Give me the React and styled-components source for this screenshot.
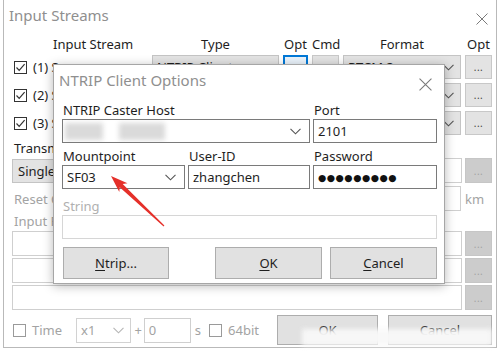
import styled, { createGlobalStyle } from 'styled-components';

const GlobalStyle = createGlobalStyle`
  html, body {
    margin: 0;
    padding: 0;
    background: #fff;
  }
  body {
    font-family: "Noto Sans", "Open Sans", sans-serif;
    font-size: 13px;
    color: #1e1e1e;
  }
`;

const Stage = styled.div`
  position: relative;
  width: 500px;
  height: 352px;
  overflow: hidden;
`;

const Window = styled.div`
  margin-left: 3px;
  width: 494px;
  height: 348px;
  box-sizing: border-box;
  border: 1px solid #b9b9b9;
  border-top: none;
  background: #fff;
  display: flex;
  flex-direction: column;
`;

const TitleBar = styled.div`
  height: ${(p) => p.$h}px;
  flex: none;
  display: flex;
  align-items: flex-start;
  justify-content: space-between;
  padding: ${(p) => p.$pt}px ${(p) => p.$pr}px 0 ${(p) => p.$pl}px;
  box-sizing: border-box;
  font-size: 15px;
  line-height: 20px;
  color: #8f8f8f;
`;

const CloseIcon = ({ size = 12 }) => (
  <svg width={size} height={size} viewBox="0 0 12 12">
    <path d="M0.5 0.5 L11.5 11.5 M11.5 0.5 L0.5 11.5" stroke="#7a7a7a" strokeWidth="1" fill="none" />
  </svg>
);

const Chevron = ({ color = '#555' }) => (
  <svg width="11" height="7" viewBox="0 0 11 7">
    <polyline points="0.5,0.8 5.5,5.8 10.5,0.8" fill="none" stroke={color} strokeWidth="1.1" />
  </svg>
);

const Body = styled.div`
  padding: 0 4px 0 8px;
  display: flex;
  flex-direction: column;
`;

const StreamGrid = styled.div`
  display: grid;
  grid-template-columns: 136px 127px 25px 27px 118px 27px;
  column-gap: 4px;
  row-gap: 4px;
  grid-auto-rows: ${(p) => (p.$header ? 'auto' : '24px')};
`;

const HeaderCell = styled.div`
  height: 22px;
  line-height: 22px;
  text-align: ${(p) => (p.$left ? 'left' : 'center')};
  padding-left: ${(p) => (p.$left ? '41px' : '0')};
`;

const StreamName = styled.div`
  display: flex;
  align-items: center;
  gap: 6px;
  padding-left: 2px;
  white-space: nowrap;
`;

const CheckBox = styled.span`
  width: 13px;
  height: 13px;
  box-sizing: border-box;
  border: 1px solid ${(p) => (p.$dim ? '#9a9a9a' : '#333')};
  background: #fff;
  display: inline-flex;
  align-items: center;
  justify-content: center;
  flex: none;
`;

const Check = () => (
  <svg width="11" height="11" viewBox="0 0 11 11">
    <polyline points="1.5,5.5 4.2,8.3 9.6,2.2" fill="none" stroke="#333" strokeWidth="1.2" />
  </svg>
);

const Combo = styled.div`
  height: ${(p) => p.$h || 24}px;
  width: ${(p) => (p.$w ? `${p.$w}px` : 'auto')};
  box-sizing: border-box;
  border: 1px solid ${(p) => p.$border || '#c4c4c4'};
  background: ${(p) => p.$bg || '#e3e3e3'};
  color: ${(p) => p.$color || '#1e1e1e'};
  display: flex;
  align-items: center;
  justify-content: space-between;
  padding: 0 6px 0 4px;
  overflow: hidden;
  white-space: nowrap;
`;

const SmallButton = styled.div`
  height: ${(p) => p.$h || 24}px;
  box-sizing: border-box;
  border: ${(p) => (p.$focus ? '2px solid #0078d7' : `1px solid ${p.$dim ? '#c6c6c6' : '#c8c8c8'}`)};
  background: ${(p) => (p.$focus ? '#eaf3fb' : p.$dim ? '#cccccc' : '#e3e3e3')};
  color: ${(p) => (p.$dim ? '#a3a3a3' : '#444')};
  display: flex;
  align-items: center;
  justify-content: center;
  font-size: 10px;
  letter-spacing: 0.5px;
  width: ${(p) => p.$w || 27}px;
  flex: none;
`;

const SectionLabel = styled.div`
  height: 16px;
  line-height: 16px;
  margin-top: ${(p) => p.$mt || 0}px;
  padding-left: 2px;
  white-space: nowrap;
  color: ${(p) => (p.$dim ? '#a3a3a3' : '#1e1e1e')};
`;

const SplitRow = styled.div`
  height: 25px;
  margin-top: ${(p) => p.$mt || 0}px;
  display: flex;
  align-items: center;
  justify-content: space-between;
`;

const RightGroup = styled.div`
  display: flex;
  align-items: center;
  gap: 3px;
  height: 100%;
`;

const Field = styled.div`
  height: ${(p) => p.$h || 25}px;
  width: ${(p) => (p.$w ? `${p.$w}px` : 'auto')};
  flex: ${(p) => (p.$w ? 'none' : '1')};
  box-sizing: border-box;
  border: 1px solid ${(p) => p.$border || '#cfcfcf'};
  background: #fff;
  display: flex;
  align-items: center;
  padding-left: 4px;
  color: ${(p) => p.$color || '#1e1e1e'};
  white-space: nowrap;
  overflow: hidden;
`;

const Unit = styled.span`
  color: #a3a3a3;
  width: 27px;
  padding-left: 1px;
`;

const FileRow = styled.div`
  height: 25px;
  margin-top: ${(p) => p.$mt || 2}px;
  display: flex;
  gap: 3px;
`;

const BottomRow = styled.div`
  position: relative;
  height: 30px;
  margin-top: 5px;
  display: flex;
  align-items: center;
  color: #a3a3a3;
`;

const Gap = styled.span`
  display: inline-block;
  width: ${(p) => p.$w}px;
  flex: none;
`;

const PushButton = styled.div`
  width: ${(p) => p.$w}px;
  height: ${(p) => p.$h || 32}px;
  box-sizing: border-box;
  border: 1px solid #adadad;
  background: #e1e1e1;
  color: #1e1e1e;
  display: flex;
  align-items: center;
  justify-content: center;
  flex: none;
  font-size: 13px;
  u {
    text-decoration: underline;
    text-underline-offset: 2px;
  }
`;

const Smudge = styled.div`
  position: absolute;
  left: 290px;
  right: 0;
  top: 14px;
  height: 17px;
  background: rgba(248, 248, 248, 0.97);
  filter: blur(2.5px);
`;

/* ---------- front dialog ---------- */

const Dialog = styled.div`
  position: absolute;
  left: 53px;
  top: 64px;
  width: 392px;
  height: 220px;
  box-sizing: border-box;
  border: 1px solid #a6a6a6;
  background: #fff;
  box-shadow: 0 2px 10px rgba(0, 0, 0, 0.28);
  display: flex;
  flex-direction: column;
`;

const Form = styled.div`
  padding: 0 6px 0 8px;
  display: grid;
  grid-template-columns: 123px 122px 124px;
  column-gap: 3px;
  row-gap: 4px;
`;

const FieldBox = styled.div`
  grid-column: span ${(p) => p.$span || 1};
  margin-top: ${(p) => p.$mt || 0}px;
  display: flex;
  flex-direction: column;
`;

const Label = styled.div`
  height: 18px;
  line-height: 18px;
  padding-left: 1px;
  color: ${(p) => (p.$dim ? '#b0b0b0' : '#1e1e1e')};
`;

const Input = styled.div`
  height: 24px;
  box-sizing: border-box;
  border: 1px solid ${(p) => (p.$dim ? '#d6d6d6' : '#7a7a7a')};
  background: #fff;
  display: flex;
  align-items: center;
  justify-content: space-between;
  padding: 0 8px 0 ${(p) => p.$pl ?? 4}px;
  overflow: hidden;
  white-space: nowrap;
`;

const BlurGroup = styled.span`
  display: flex;
  align-items: center;
`;

const Blur = styled.span`
  display: inline-block;
  width: ${(p) => p.$w}px;
  height: 17px;
  margin-left: ${(p) => p.$ml || 0}px;
  background: #dadada;
  filter: blur(2.5px);
`;

const Dots = styled.span`
  font-family: "DejaVu Sans", sans-serif;
  font-size: 9.5px;
  letter-spacing: 0.5px;
  color: #111;
`;

const ButtonBar = styled.div`
  grid-column: span 3;
  margin-top: 4px;
  display: flex;
  justify-content: space-between;
  padding-left: 1px;
`;

const ButtonPair = styled.div`
  display: flex;
  gap: 8px;
`;

const Arrow = styled.svg`
  position: absolute;
  left: 0;
  top: 0;
  pointer-events: none;
`;

const streams = [
  { n: 1, type: 'NTRIP Client', fmt: 'RTCM 3' },
  { n: 2, type: 'NTRIP Client', fmt: 'RTCM 3' },
  { n: 3, type: 'NTRIP Client', fmt: 'RTCM 3' },
];

export default function App() {
  return (
    <Stage>
      <GlobalStyle />
      <Window>
        <TitleBar $h={33} $pt={5} $pl={5} $pr={8}>
          <span>Input Streams</span>
          <span style={{ marginTop: 4 }}>
            <CloseIcon />
          </span>
        </TitleBar>
        <Body>
          <StreamGrid $header>
            <HeaderCell $left>Input Stream</HeaderCell>
            <HeaderCell>Type</HeaderCell>
            <HeaderCell>Opt</HeaderCell>
            <HeaderCell>Cmd</HeaderCell>
            <HeaderCell>Format</HeaderCell>
            <HeaderCell>Opt</HeaderCell>
          </StreamGrid>
          <StreamGrid>
            {streams.flatMap((s) => [
              <StreamName key={`n${s.n}`}>
                <CheckBox>
                  <Check />
                </CheckBox>
                <span>({s.n}) S</span>
              </StreamName>,
              <Combo key={`t${s.n}`}>
                <span>{s.type}</span>
                <Chevron />
              </Combo>,
              <SmallButton key={`o${s.n}`} $focus={s.n === 1} $w={25} />,
              <SmallButton key={`c${s.n}`} />,
              <Combo key={`f${s.n}`}>
                <span>{s.fmt}</span>
                <Chevron />
              </Combo>,
              <SmallButton key={`p${s.n}`}>...</SmallButton>,
            ])}
          </StreamGrid>

          <SectionLabel $mt={5}>Transmit</SectionLabel>
          <SplitRow $mt={2}>
            <Combo $w={200} $h={24}>
              <span style={{ paddingLeft: 1 }}>Single</span>
              <Chevron />
            </Combo>
            <RightGroup>
              <Field $w={130} />
              <SmallButton $dim $h={25}>...</SmallButton>
            </RightGroup>
          </SplitRow>
          <SplitRow $mt={3}>
            <SectionLabel $dim>Reset C</SectionLabel>
            <RightGroup>
              <Field $w={130} />
              <Unit>km</Unit>
            </RightGroup>
          </SplitRow>
          <SectionLabel $dim $mt={2}>Input F</SectionLabel>
          <FileRow $mt={2}>
            <Field />
            <SmallButton $dim $h={25}>...</SmallButton>
          </FileRow>
          <FileRow>
            <Field />
            <SmallButton $dim $h={25}>...</SmallButton>
          </FileRow>
          <FileRow>
            <Field />
            <SmallButton $dim $h={25}>...</SmallButton>
          </FileRow>

          <BottomRow>
            <Gap $w={1} />
            <CheckBox $dim />
            <Gap $w={6} />
            <span>Time</span>
            <Gap $w={14} />
            <Combo $w={59} $h={25} $bg="#fff" $border="#d2d2d2" $color="#a3a3a3">
              <span>x1</span>
              <Chevron color="#b5b5b5" />
            </Combo>
            <Gap $w={3} />
            <span>+</span>
            <Gap $w={2} />
            <Field $w={47} $color="#a3a3a3">0</Field>
            <Gap $w={4} />
            <span>s</span>
            <Gap $w={8} />
            <CheckBox $dim />
            <Gap $w={6} />
            <span>64bit</span>
            <Gap $w={18} />
            <PushButton $w={101} $h={30}>OK</PushButton>
            <Gap $w={10} />
            <PushButton $w={104} $h={30}>Cancel</PushButton>
            <Smudge />
          </BottomRow>
        </Body>
      </Window>

      <Dialog>
        <TitleBar $h={36} $pt={5} $pl={5} $pr={12}>
          <span>NTRIP Client Options</span>
          <span style={{ marginTop: 5 }}>
            <CloseIcon size={13} />
          </span>
        </TitleBar>
        <Form>
          <FieldBox $span={2}>
            <Label>NTRIP Caster Host</Label>
            <Input $pl={2}>
              <BlurGroup>
                <Blur $w={38} />
                <Blur $w={46} $ml={16} />
              </BlurGroup>
              <Chevron />
            </Input>
          </FieldBox>
          <FieldBox>
            <Label>Port</Label>
            <Input>2101</Input>
          </FieldBox>
          <FieldBox>
            <Label>Mountpoint</Label>
            <Input>
              <span>SF03</span>
              <Chevron />
            </Input>
          </FieldBox>
          <FieldBox>
            <Label>User-ID</Label>
            <Input>zhangchen</Input>
          </FieldBox>
          <FieldBox>
            <Label>Password</Label>
            <Input>
              <Dots>●●●●●●●●●</Dots>
            </Input>
          </FieldBox>
          <FieldBox $span={3} $mt={4}>
            <Label $dim>String</Label>
            <Input $dim />
          </FieldBox>
          <ButtonBar>
            <PushButton $w={106}>
              <span>
                <u>N</u>trip...
              </span>
            </PushButton>
            <ButtonPair>
              <PushButton $w={107}>
                <span>
                  <u>O</u>K
                </span>
              </PushButton>
              <PushButton $w={107}>
                <span>
                  <u>C</u>ancel
                </span>
              </PushButton>
            </ButtonPair>
          </ButtonBar>
        </Form>
      </Dialog>

      <Arrow width="500" height="352" viewBox="0 0 500 352">
        <polygon
          points="111,176 127.5,183.3 122.7,184 164.4,225.6 163.6,226.4 119.7,187.2 119.3,192.1"
          fill="#e5302a"
        />
      </Arrow>
    </Stage>
  );
}
